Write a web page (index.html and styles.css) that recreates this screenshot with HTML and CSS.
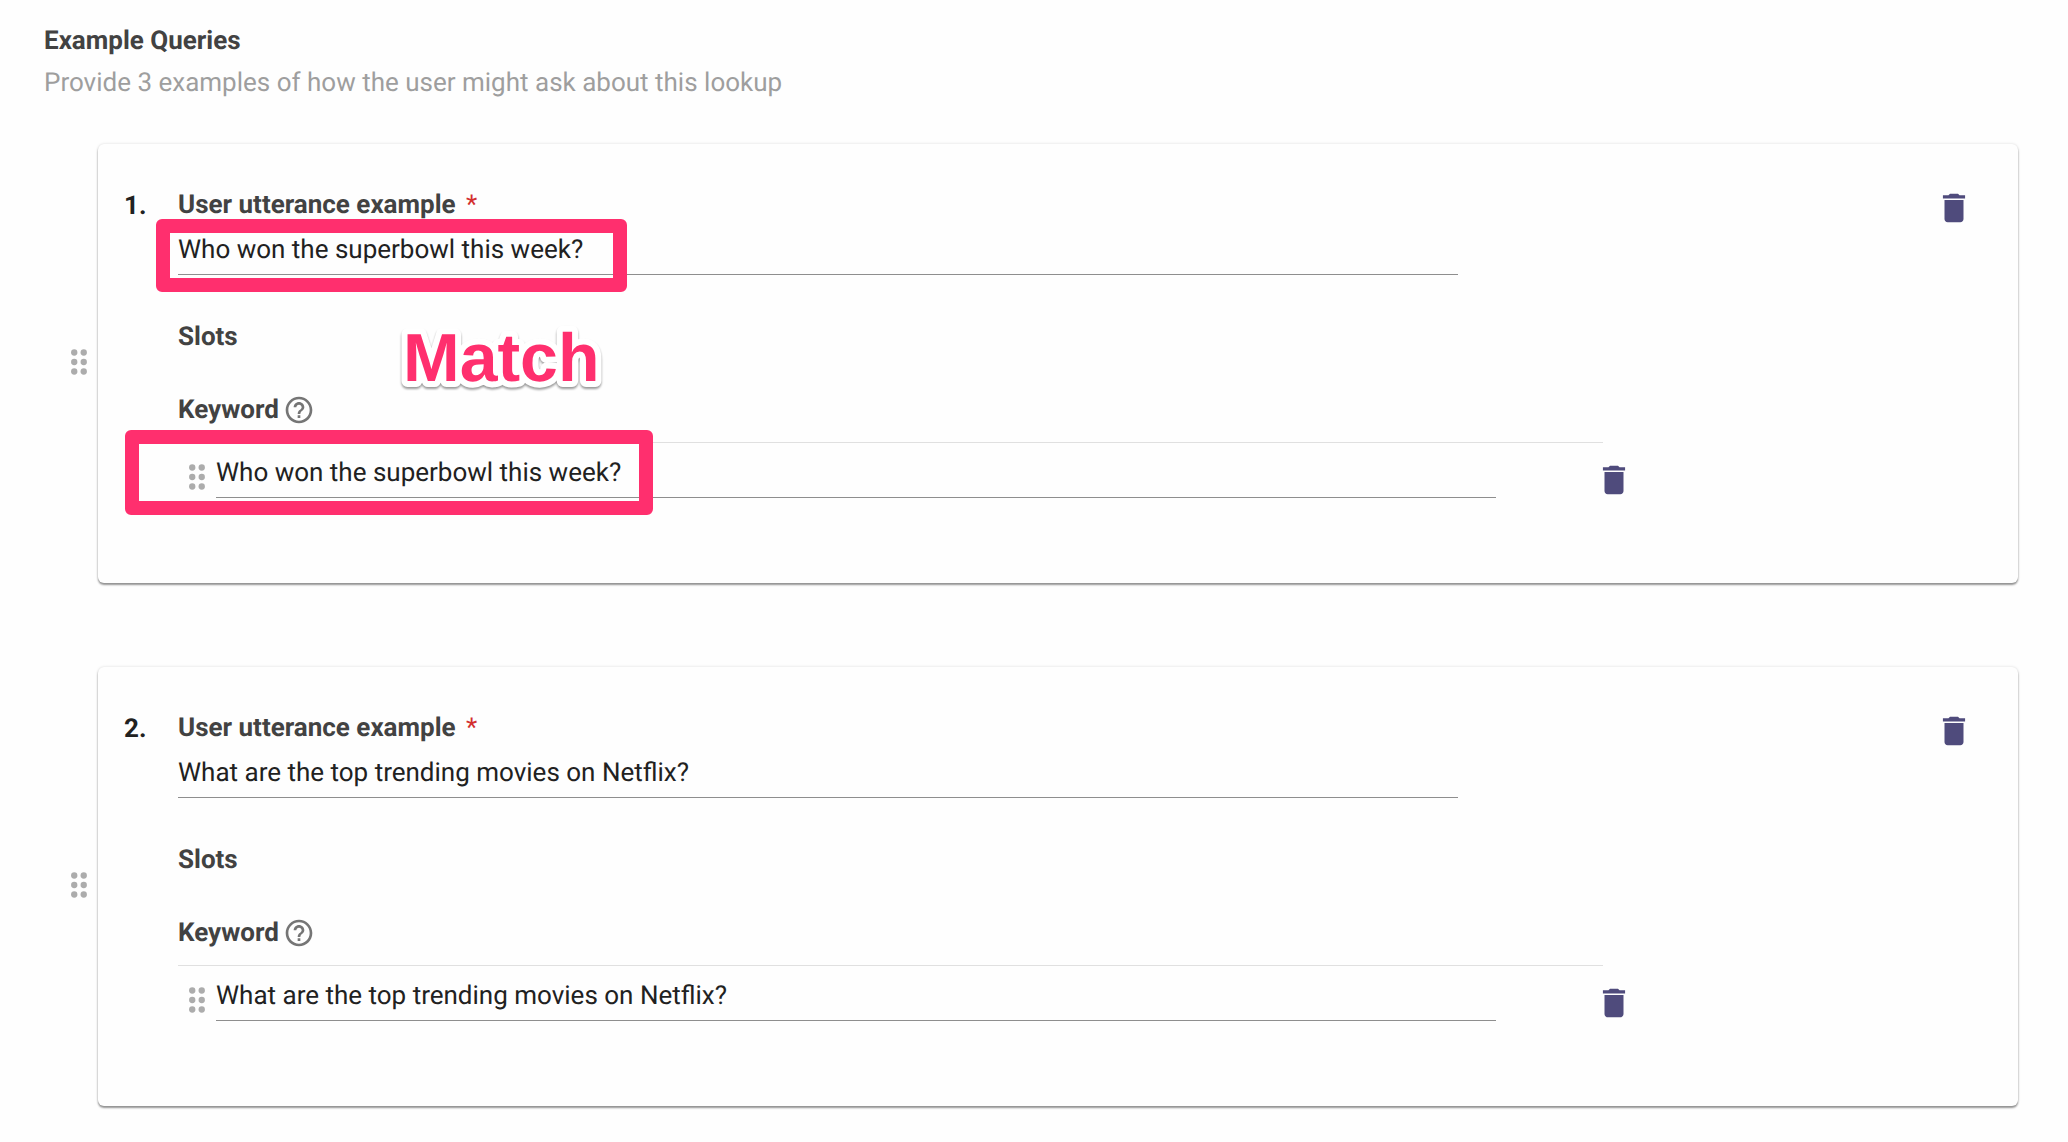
FILE: index.html
```html
<!DOCTYPE html>
<html lang="en">
<head>
<meta charset="utf-8">
<title>Example Queries</title>
<link rel="stylesheet" href="styles.css">
</head>
<body>
<svg class="sprite" aria-hidden="true">
  <symbol id="trash" viewBox="0 0 24 24"><path d="M6 19c0 1.100.9 2 2 2h8c1.100 0 2-.9 2-2V7H6v12zM19 4h-3.500l-1-1h-5l-1 1H5v2h14V4z"/></symbol>
  <symbol id="drag" viewBox="0 0 24 24"><circle cx="9" cy="6" r="2"/><circle cx="15" cy="6" r="2"/><circle cx="9" cy="12" r="2"/><circle cx="15" cy="12" r="2"/><circle cx="9" cy="18" r="2"/><circle cx="15" cy="18" r="2"/></symbol>
  <symbol id="help" viewBox="0 0 24 24"><path d="M11 18h2v-2h-2v2zm1-16C6.480 2 2 6.480 2 12s4.480 10 10 10 10-4.480 10-10S17.520 2 12 2zm0 18c-4.410 0-8-3.590-8-8s3.590-8 8-8 8 3.590 8 8-3.590 8-8 8zm0-14c-2.210 0-4 1.790-4 4h2c0-1.100.9-2 2-2s2 .9 2 2c0 2-3 1.750-3 5h2c0-2.250 3-2.500 3-5 0-2.210-1.790-4-4-4z"/></symbol>
</svg>
<main class="page">
  <header class="intro">
    <h1 class="heading">Example Queries</h1>
    <p class="hint">Provide 3 examples of how the user might ask about this lookup</p>
  </header>
  <ol class="queries">
    <li class="query">
      <button class="icon-button handle" aria-label="Reorder example 1"><svg class="icon"><use href="#drag"/></svg></button>
      <section class="card">
        <span class="number">1.</span>
        <div class="content">
          <label class="heading" for="utterance-1">User utterance example <span class="required">*</span></label>
          <input class="field" id="utterance-1" type="text" value="Who won the superbowl this week?" required>
          <h2 class="heading slots">Slots</h2>
          <div class="slot-title">
            <label class="heading" for="keyword-1">Keyword</label>
            <button class="icon-button help" aria-label="About keyword"><svg class="icon"><use href="#help"/></svg></button>
          </div>
          <div class="slot-row">
            <button class="icon-button handle" aria-label="Reorder keyword"><svg class="icon"><use href="#drag"/></svg></button>
            <input class="field" id="keyword-1" type="text" value="Who won the superbowl this week?">
            <button class="icon-button trash" aria-label="Delete keyword"><svg class="icon"><use href="#trash"/></svg></button>
          </div>
        </div>
        <button class="icon-button trash" aria-label="Delete example 1"><svg class="icon"><use href="#trash"/></svg></button>
        <div class="marker marker-utterance"></div>
        <div class="marker marker-keyword"></div>
        <svg class="callout" width="220" height="80"><text x="10" y="60">Match</text></svg>
      </section>
    </li>
    <li class="query">
      <button class="icon-button handle" aria-label="Reorder example 2"><svg class="icon"><use href="#drag"/></svg></button>
      <section class="card">
        <span class="number">2.</span>
        <div class="content">
          <label class="heading" for="utterance-2">User utterance example <span class="required">*</span></label>
          <input class="field" id="utterance-2" type="text" value="What are the top trending movies on Netflix?" required>
          <h2 class="heading slots">Slots</h2>
          <div class="slot-title">
            <label class="heading" for="keyword-2">Keyword</label>
            <button class="icon-button help" aria-label="About keyword"><svg class="icon"><use href="#help"/></svg></button>
          </div>
          <div class="slot-row">
            <button class="icon-button handle" aria-label="Reorder keyword"><svg class="icon"><use href="#drag"/></svg></button>
            <input class="field" id="keyword-2" type="text" value="What are the top trending movies on Netflix?">
            <button class="icon-button trash" aria-label="Delete keyword"><svg class="icon"><use href="#trash"/></svg></button>
          </div>
        </div>
        <button class="icon-button trash" aria-label="Delete example 2"><svg class="icon"><use href="#trash"/></svg></button>
      </section>
    </li>
  </ol>
</main>
</body>
</html>
```
FILE: styles.css
```css
* { box-sizing: border-box; }

body {
  margin: 0;
  background: #fefefe;
  color: #212121;
  font-family: Roboto, "Liberation Sans", sans-serif;
  font-size: 26px;
  line-height: 32px;
  text-rendering: geometricPrecision;
}

.sprite { position: absolute; width: 0; height: 0; }
.page { padding: 25px 50px 36px 44px; }

.heading {
  margin: 0;
  color: #424242;
  font-size: 26px;
  font-weight: 700;
  line-height: 32px;
}

.hint { margin: 10px 0 0; color: #9e9e9e; }

.queries {
  display: flex;
  flex-direction: column;
  gap: 84px;
  margin: 45px 0 0;
  padding: 0;
  list-style: none;
}

.query {
  display: grid;
  grid-template-columns: 54px 1fr;
  align-items: center;
}
.query > .handle { justify-self: center; margin: 0 0 4px 16px; }

.card {
  position: relative;
  display: grid;
  grid-template-columns: 54px 1fr 38px;
  align-items: start;
  padding: 45px 45px 84px 26px;
  border-radius: 6px;
  box-shadow: 0 2px 2px rgba(0, 0, 0, 0.4), 0 0 3px rgba(0, 0, 0, 0.14);
  background: #fefefe;
}

.number { padding-top: 1px; font-weight: 700; }
.content { margin-right: 4px; }
.content .heading { display: block; }
.required { margin-left: 4px; color: #d32f2f; font-weight: 400; }

.field {
  display: block;
  width: 73%;
  height: 54px;
  padding: 5px 0 0;
  border: 0;
  border-bottom: 1px solid #8e8e8e;
  background: transparent;
  color: #212121;
  font: inherit;
  text-rendering: inherit;
  outline: 0;
}

.slots { padding-top: 46px; }

.slot-title {
  display: flex;
  align-items: center;
  gap: 4px;
  width: 81.3%;
  padding: 41px 0 16px;
  border-bottom: 1px solid #e0e0e0;
}

.slot-row { display: flex; padding-top: 1px; }

.icon-button {
  display: block;
  width: 38px;
  height: 38px;
  padding: 0;
  border: 0;
  background: transparent;
  cursor: pointer;
}
.icon { display: block; width: 100%; height: 100%; fill: currentColor; }
.handle { color: #acacac; cursor: grab; }
.help { width: 32px; height: 32px; color: #757575; }
.trash { color: #4f4b7c; }
.slot-row .handle { margin-top: 14px; }
.slot-row .trash { margin: 17px 0 0 99px; }

/* Annotations laid over the first card */
.marker {
  position: absolute;
  border: 14px solid #ff2f6e;
  border-radius: 6px;
  pointer-events: none;
}
.marker-utterance { top: 75px; left: 58px; width: 471px; height: 73px; }
.marker-keyword { top: 286px; left: 27px; width: 528px; height: 85px; }

.callout {
  position: absolute;
  top: 177px;
  left: 295px;
  fill: #ff2f6e;
  stroke: #fff;
  stroke-width: 12px;
  stroke-linejoin: round;
  paint-order: stroke;
  font: 700 68px "Liberation Sans", sans-serif;
  filter: drop-shadow(0 2px 1px rgba(0, 0, 0, 0.4));
  pointer-events: none;
}
```
